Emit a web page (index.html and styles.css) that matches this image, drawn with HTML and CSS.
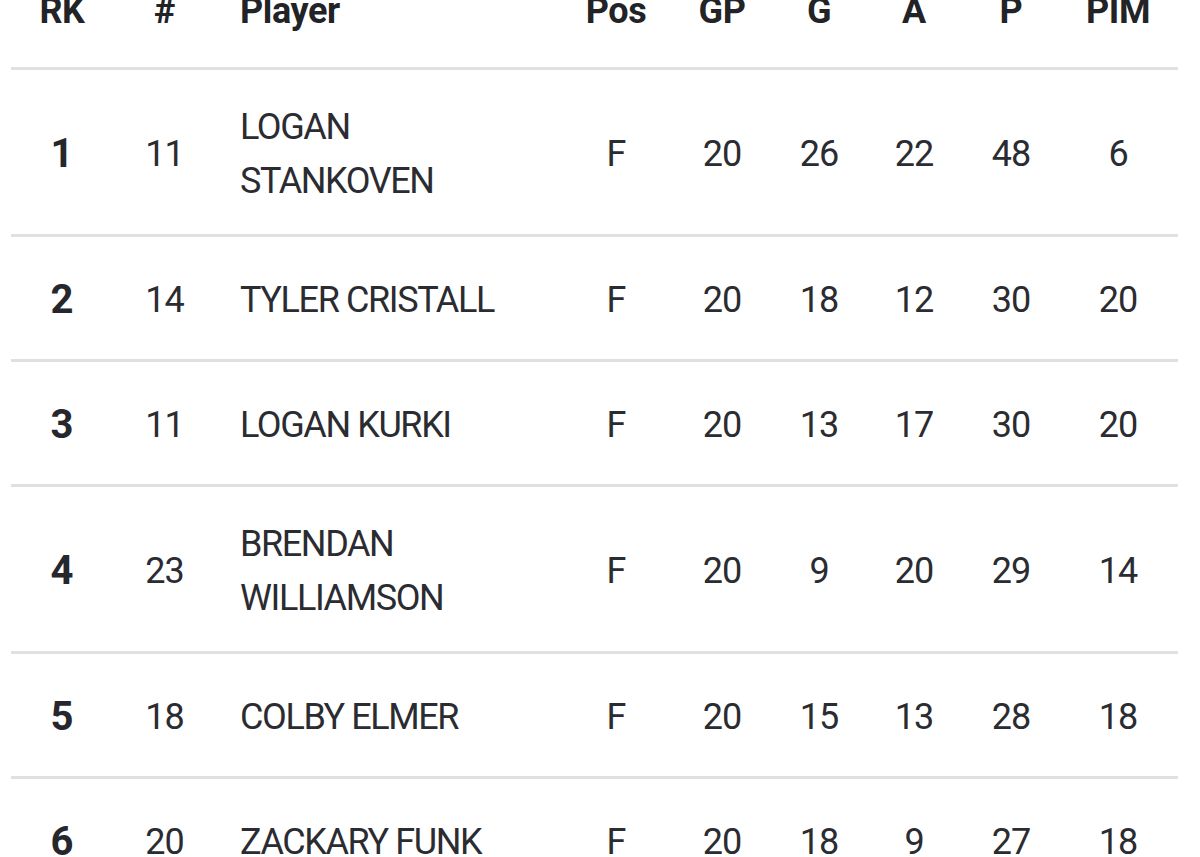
FILE: index.html
```html
<!DOCTYPE html>
<html lang="en">
<head>
<meta charset="utf-8">
<title>Scoring Leaders</title>
<link rel="stylesheet" href="styles.css">
</head>
<body>
<div class="stats">
  <div class="row head">
    <div class="c">RK</div>
    <div class="c">#</div>
    <div class="c name">Player</div>
    <div class="c">Pos</div>
    <div class="c">GP</div>
    <div class="c">G</div>
    <div class="c">A</div>
    <div class="c">P</div>
    <div class="c pim">PIM</div>
  </div>
  <div class="row">
    <div class="c rk">1</div>
    <div class="c">11</div>
    <div class="c name"><span>LOGAN STANKOVEN</span></div>
    <div class="c">F</div>
    <div class="c">20</div>
    <div class="c">26</div>
    <div class="c">22</div>
    <div class="c">48</div>
    <div class="c pim">6</div>
  </div>
  <div class="row">
    <div class="c rk">2</div>
    <div class="c">14</div>
    <div class="c name"><span>TYLER CRISTALL</span></div>
    <div class="c">F</div>
    <div class="c">20</div>
    <div class="c">18</div>
    <div class="c">12</div>
    <div class="c">30</div>
    <div class="c pim">20</div>
  </div>
  <div class="row">
    <div class="c rk">3</div>
    <div class="c">11</div>
    <div class="c name"><span>LOGAN KURKI</span></div>
    <div class="c">F</div>
    <div class="c">20</div>
    <div class="c">13</div>
    <div class="c">17</div>
    <div class="c">30</div>
    <div class="c pim">20</div>
  </div>
  <div class="row">
    <div class="c rk">4</div>
    <div class="c">23</div>
    <div class="c name"><span>BRENDAN WILLIAMSON</span></div>
    <div class="c">F</div>
    <div class="c">20</div>
    <div class="c">9</div>
    <div class="c">20</div>
    <div class="c">29</div>
    <div class="c pim">14</div>
  </div>
  <div class="row">
    <div class="c rk">5</div>
    <div class="c">18</div>
    <div class="c name"><span>COLBY ELMER</span></div>
    <div class="c">F</div>
    <div class="c">20</div>
    <div class="c">15</div>
    <div class="c">13</div>
    <div class="c">28</div>
    <div class="c pim">18</div>
  </div>
  <div class="row">
    <div class="c rk">6</div>
    <div class="c">20</div>
    <div class="c name"><span>ZACKARY FUNK</span></div>
    <div class="c">F</div>
    <div class="c">20</div>
    <div class="c">18</div>
    <div class="c">9</div>
    <div class="c">27</div>
    <div class="c pim">18</div>
  </div>
</div>
</body>
</html>
```
FILE: styles.css
```css
html, body {
  margin: 0;
  padding: 0;
  background: #ffffff;
}

body {
  font-family: Roboto, "Liberation Sans", sans-serif;
  color: #2a2c31;
  overflow: hidden;
}

.stats {
  width: 1167px;
  margin: -44px 0 0 11px;
}

.row {
  display: grid;
  grid-template-columns: 102px 103px 352px 96px 116px 78px 112px 82px 126px;
  align-items: center;
  box-sizing: border-box;
  min-height: 125px;
  padding: 30px 0 26px;
  border-bottom: 3px solid #dfe0e3;
}

.row.head {
  min-height: 0;
  padding: 28px 0 29px;
  color: #222326;
}

.c {
  font-size: 36px;
  line-height: 54px;
  text-align: center;
  letter-spacing: -1px;
}

.head .c {
  font-weight: 700;
  letter-spacing: -0.4px;
}

.c.name {
  text-align: left;
  padding-left: 24px;
}

.c.name span {
  display: block;
  max-width: 285px;
  letter-spacing: -1.4px;
}

.c.pim {
  padding-left: 6px;
}

.c.rk {
  font-size: 40px;
  font-weight: 700;
  letter-spacing: 0;
  color: #25272c;
}
```
